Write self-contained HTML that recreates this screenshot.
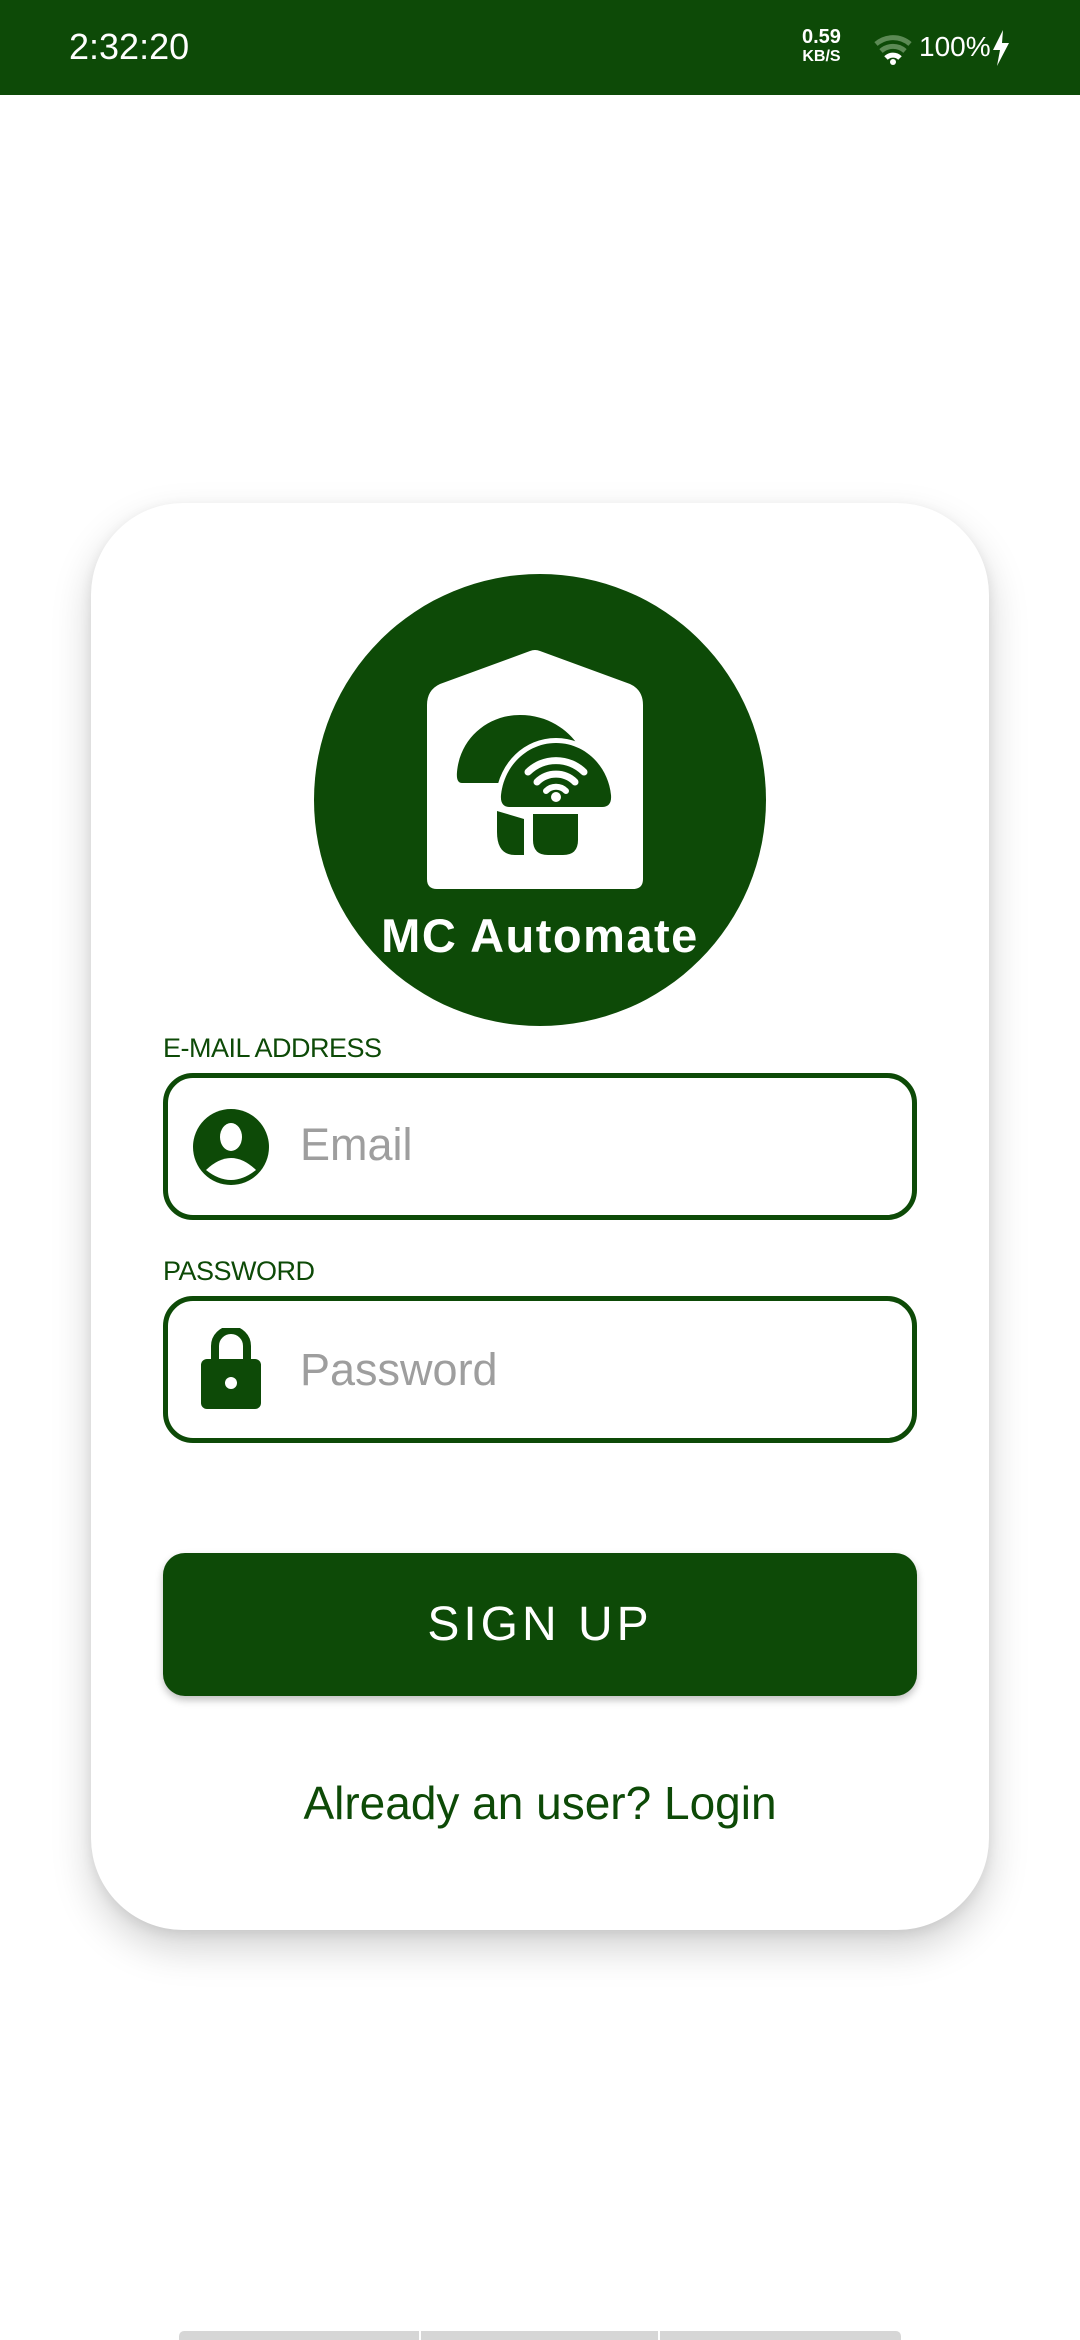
<!DOCTYPE html>
<html><head><meta charset="utf-8"><style>
html,body{margin:0;padding:0;width:1080px;height:2340px;background:#fff;overflow:hidden;font-family:"Liberation Sans",sans-serif}
.sb{position:absolute;left:0;top:0;width:1080px;height:95px;background:#0d4a07;color:#fff}
.card{position:absolute;left:91px;top:503px;width:898px;height:1427px;border-radius:92px;background:#fff;box-shadow:0 18px 40px rgba(0,0,0,0.18),0 4px 12px rgba(0,0,0,0.08)}
.lbl{position:absolute;left:163px;color:#0d4a07;font-size:27px;letter-spacing:-0.5px}
.box{position:absolute;left:163px;width:744px;height:137px;border:5px solid #0d4a07;border-radius:30px}
.ph{position:absolute;left:300px;color:#9e9e9e;font-size:45px;font-weight:300}
.btn{position:absolute;left:163px;top:1553px;width:754px;height:143px;border-radius:22px;background:#0d4a07;color:#fff;font-size:48px;letter-spacing:4px;text-align:center;line-height:143px;box-shadow:0 4px 8px rgba(0,0,0,0.25)}
</style></head><body>
<div class="sb">
<div style="position:absolute;left:69px;top:26px;font-size:36px">2:32:20</div>
<div style="position:absolute;left:802px;top:28px;font-size:20px;font-weight:bold;line-height:18px;text-align:center">0.59<br><span style="font-size:16px">KB/S</span></div>
<svg style="position:absolute;left:874px;top:32px" width="40" height="34" viewBox="0 0 40 34"><path d="M2 12 A26 26 0 0 1 36 12" stroke="#5c8a55" stroke-width="5" fill="none"/><path d="M7 19 A18 18 0 0 1 31 19" stroke="#5c8a55" stroke-width="5" fill="none"/><path d="M12 26 A10 10 0 0 1 26 26" stroke="#fff" stroke-width="5" fill="none"/><circle cx="19" cy="30" r="3" fill="#fff"/></svg>
<div style="position:absolute;left:919px;top:31px;font-size:28px">100%</div>
<svg style="position:absolute;left:991px;top:30px" width="20" height="36" viewBox="0 0 20 36"><path d="M12 0 L2 20 L9 20 L6 36 L18 13 L11 13 Z" fill="#fff"/></svg>
</div>
<div class="card"></div>
<svg style="position:absolute;left:0;top:0" width="1080" height="1100" viewBox="0 0 1080 1100">
<circle cx="540" cy="800" r="226" fill="#0d4a07"/>
<path d="M427,705 Q427,690 440,684 L530,651 Q535,649 540,651 L630,684 Q643,690 643,705 L643,879 Q643,889 633,889 L437,889 Q427,889 427,879 Z" fill="#fff"/>
<path d="M462,783 Q456,783 457,772 C460,738 488,715 520,715 C548,715 568,730 578,745 L560,760 L540,783 Z" fill="#0d4a07"/>
<path d="M510,807 Q500,807 501,795 C504,766 527,743 556,743 C585,743 608,766 611,795 Q612,807 602,807 Z" fill="#0d4a07" stroke="#fff" stroke-width="10" stroke-linejoin="round"/>
<path d="M510,807 Q500,807 501,795 C504,766 527,743 556,743 C585,743 608,766 611,795 Q612,807 602,807 Z" fill="#0d4a07"/>
<path d="M497,811 L524,819 L524,855 L515,855 Q497,855 497,832 Z" fill="#0d4a07"/>
<path d="M533,814 L578,814 L578,840 Q578,855 563,855 L548,855 Q533,855 533,840 Z" fill="#0d4a07"/>
<path d="M528,772 A40,40 0 0 1 584,772" stroke="#fff" stroke-width="7" fill="none" stroke-linecap="round"/>
<path d="M537,782 A27,27 0 0 1 575,782" stroke="#fff" stroke-width="7" fill="none" stroke-linecap="round"/>
<path d="M546,791 A14,14 0 0 1 566,791" stroke="#fff" stroke-width="6" fill="none" stroke-linecap="round"/>
<circle cx="556" cy="797" r="5" fill="#fff"/>
<text x="540" y="952" text-anchor="middle" font-family="Liberation Sans" font-weight="bold" font-size="47" letter-spacing="1.5" fill="#fff">MC Automate</text>
</svg>
<div class="lbl" style="top:1033px">E-MAIL ADDRESS</div>
<div class="box" style="top:1073px"></div>
<svg style="position:absolute;left:192px;top:1108px" width="78" height="78" viewBox="0 0 78 78"><circle cx="39" cy="39" r="38" fill="#0d4a07"/><ellipse cx="39" cy="29" rx="11" ry="14" fill="#fff"/><path d="M14 62 Q39 38 64 62 Q39 82 14 62 Z" fill="#fff"/></svg>
<div class="ph" style="top:1119px">Email</div>
<div class="lbl" style="top:1256px">PASSWORD</div>
<div class="box" style="top:1296px"></div>
<svg style="position:absolute;left:200px;top:1328px" width="62" height="82" viewBox="0 0 62 82"><path d="M15 32 L15 18 A16 16 0 0 1 47 18 L47 32" stroke="#0d4a07" stroke-width="8" fill="none"/><rect x="1" y="31" width="60" height="50" rx="6" fill="#0d4a07"/><circle cx="31" cy="55" r="6" fill="#fff"/></svg>
<div class="ph" style="top:1344px">Password</div>
<div class="btn">SIGN UP</div>
<div style="position:absolute;left:0;width:1080px;top:1776px;text-align:center;color:#0d4a07;font-size:46px;font-weight:300">Already an user? Login</div>
<div style="position:absolute;left:179px;top:2331px;width:240px;height:9px;background:#d6d6d6;border-radius:5px 0 0 0"></div>
<div style="position:absolute;left:421px;top:2331px;width:237px;height:9px;background:#d6d6d6"></div>
<div style="position:absolute;left:660px;top:2331px;width:241px;height:9px;background:#d6d6d6;border-radius:0 5px 0 0"></div>
</body></html>
